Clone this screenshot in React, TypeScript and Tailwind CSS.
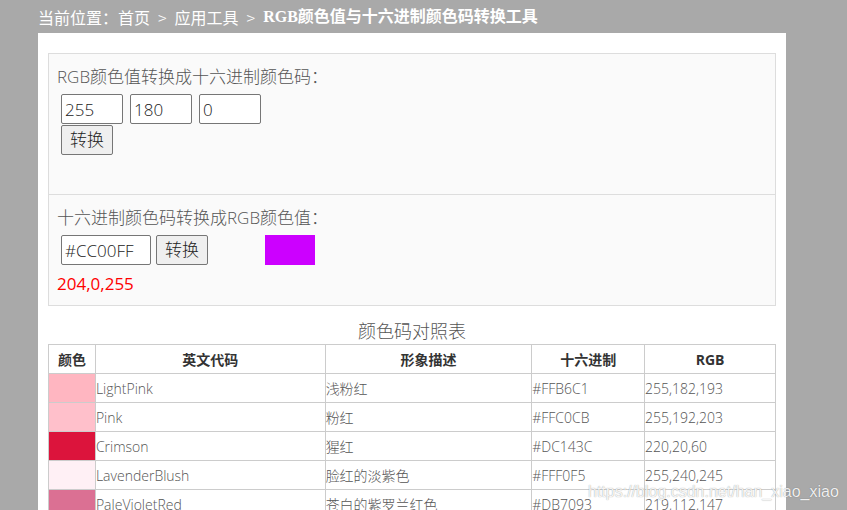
import React from 'react';

const rows = [
  { color: '#FFB6C1', name: 'LightPink', desc: '浅粉红', hex: '#FFB6C1', rgb: '255,182,193' },
  { color: '#FFC0CB', name: 'Pink', desc: '粉红', hex: '#FFC0CB', rgb: '255,192,203' },
  { color: '#DC143C', name: 'Crimson', desc: '猩红', hex: '#DC143C', rgb: '220,20,60' },
  { color: '#FFF0F5', name: 'LavenderBlush', desc: '脸红的淡紫色', hex: '#FFF0F5', rgb: '255,240,245' },
  { color: '#DB7093', name: 'PaleVioletRed', desc: '苍白的紫罗兰红色', hex: '#DB7093', rgb: '219,112,147' },
];

const font = "font-['Open_Sans','Noto_Sans_CJK_SC',sans-serif]";

function Field({ value, w }: { value: string; w: string }) {
  return (
    <input
      readOnly
      value={value}
      className={`${w} h-[30px] rounded-[2px] border border-[#767676] bg-white px-[3px] text-[17px] font-light text-[#222] outline-none ${font}`}
    />
  );
}

function Btn() {
  return (
    <button className={`h-[30px] w-[52px] rounded-[2px] border border-[#767676] bg-[#efefef] text-[17px] font-light text-[#222] ${font}`}>
      转换
    </button>
  );
}

export default function App() {
  return (
    <div className={`relative h-[510px] w-[847px] overflow-hidden bg-[#a9a9a9] ${font}`}>
      <div className="flex h-[33px] items-center pl-[38px] text-[16px] text-white font-['Noto_Sans_CJK_SC',sans-serif]">
        <span>当前位置：首页</span>
        <span className="mx-[8px] font-light">&gt;</span>
        <span>应用工具</span>
        <span className="mx-[8px] font-light">&gt;</span>
        <span className="font-bold font-['Liberation_Serif','Noto_Sans_CJK_SC',serif]">RGB颜色值与十六进制颜色码转换工具</span>
      </div>
      <div className="ml-[38px] h-[477px] w-[748px] bg-white px-[10px] pt-[20px]">
        <div className="border border-[#dddddd] bg-[#fafafa] font-light text-[#555]">
          <div className="h-[141px] border-b border-[#dddddd] px-[8px] pt-[10px]">
            <div className="text-[17px] leading-[26px]">RGB颜色值转换成十六进制颜色码：</div>
            <div className="mt-[4px] flex gap-[7px] pl-[4px]">
              <Field value="255" w="w-[62px]" />
              <Field value="180" w="w-[62px]" />
              <Field value="0" w="w-[62px]" />
            </div>
            <div className="mt-px pl-[4px]">
              <Btn />
            </div>
          </div>
          <div className="h-[110px] px-[8px] pt-[10px]">
            <div className="text-[17px] leading-[26px]">十六进制颜色码转换成RGB颜色值：</div>
            <div className="mt-[4px] flex items-center pl-[4px]">
              <Field value="#CC00FF" w="w-[90px]" />
              <div className="ml-[5px]">
                <Btn />
              </div>
              <div className="ml-[57px] h-[30px] w-[50px] bg-[#cc00ff]" />
            </div>
            <div className="mt-[7px] text-[17px] font-normal leading-[24px] text-[#ff0000]">204,0,255</div>
          </div>
        </div>
        <div className="mt-[12px] text-center text-[18px] font-light leading-[26px] text-[#555]">颜色码对照表</div>
        <table className="w-[728px] border-collapse text-[14px] font-light text-[#555]">
          <colgroup>
            <col className="w-[47px]" />
            <col className="w-[230px]" />
            <col className="w-[207px]" />
            <col className="w-[113px]" />
            <col className="w-[131px]" />
          </colgroup>
          <thead>
            <tr className="h-[29px]">
              {['颜色', '英文代码', '形象描述', '十六进制', 'RGB'].map((h) => (
                <th key={h} className="border border-[#cccccc] p-0 text-center font-bold text-[#333]">
                  {h}
                </th>
              ))}
            </tr>
          </thead>
          <tbody>
            {rows.map((r) => (
              <tr key={r.name} className="h-[29px]">
                <td className="border border-[#cccccc] p-0" style={{ backgroundColor: r.color }} />
                <td className="border border-[#cccccc] p-0">{r.name}</td>
                <td className="border border-[#cccccc] p-0">{r.desc}</td>
                <td className="border border-[#cccccc] p-0">{r.hex}</td>
                <td className="border border-[#cccccc] p-0">{r.rgb}</td>
              </tr>
            ))}
          </tbody>
        </table>
      </div>
      <div className="absolute left-[588px] top-[481px] text-[16px] leading-[22px] text-white/90 [text-shadow:0_0_1px_rgba(0,0,0,0.45)] font-['Liberation_Sans',sans-serif]">
        https://blog.csdn.net/han_xiao_xiao
      </div>
    </div>
  );
}
